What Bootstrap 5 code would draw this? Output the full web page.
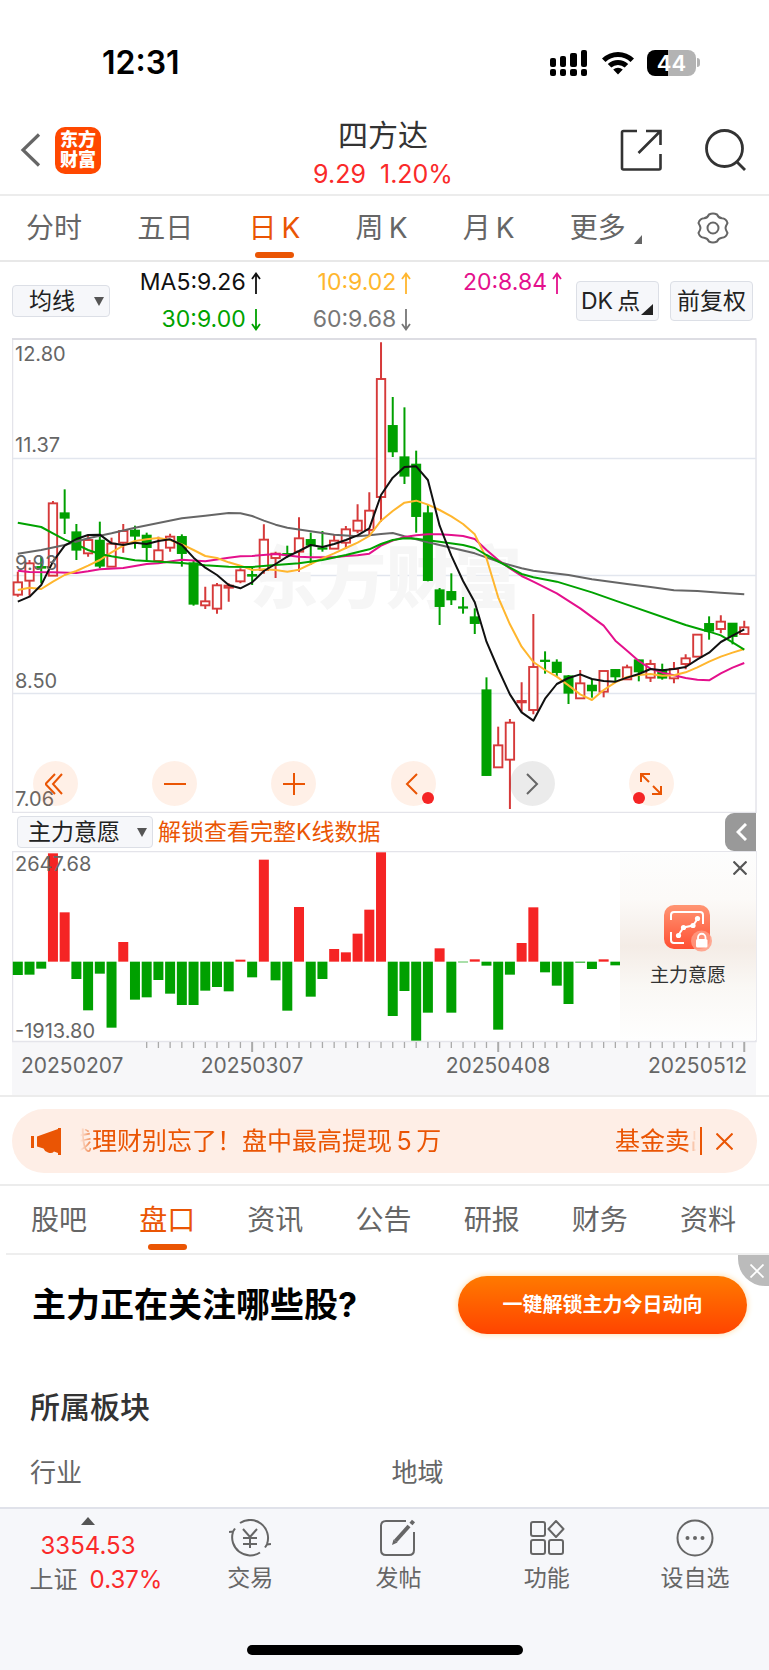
<!DOCTYPE html>
<html lang="zh-CN">
<head>
<meta charset="utf-8">
<meta name="viewport" content="width=device-width, initial-scale=1">
<title>四方达 日K</title>
<link href="https://cdn.jsdelivr.net/npm/bootstrap@5.3.0/dist/css/bootstrap.min.css" rel="stylesheet">
<style>
:root { --accent:#ea5504; --up:#fa2a2a; --txt:#333; --dim:#666; }
body { font-family: Inter, "Noto Sans CJK SC", sans-serif; color: var(--txt); background:#fff; }
a { text-decoration: none; color: inherit; }
svg { display: block; flex: none; }
.plain-btn { border:0; background:none; padding:0; color:inherit; }
.rule { border-bottom: 2px solid #ececec; }

.statusbar { height: 110px; padding: 15px 69px 0 102px; font-size: 32px; font-weight: 600; color:#000; }
.wifi { margin: 0 13px 0 15px; }
.battery { width: 49px; height: 26px; border-radius: 8px; background: linear-gradient(90deg,#000 43%,#b3b3b3 43%); color:#fff; font-size: 22px; line-height: 26px; font-weight: 600; text-align:center; }
.battery-tip { width: 3px; height: 9px; border-radius: 0 3px 3px 0; background:#b3b3b3; margin-left: 1px; }

.stock-head { height: 86px; padding: 0 23px 4px 20px; }
.head-side { flex: 1; }
.head-actions { gap: 43px; }
.logo { width: 46px; height: 47px; border-radius: 10px; background:#ff4800; color:#fff; font-size: 18px; line-height: 20px; font-weight: 900; margin-left: 14px; }
.stock-name { font-size: 30px; line-height: 40px; }
.stock-price { font-size: 25px; line-height: 38px; color: var(--up); white-space: pre; }
.stock-title { padding-top: 8px; }

.period-tabs { height: 66px; padding: 0 40px 0 26px; font-size: 28px; color: var(--dim); border-bottom: 2px solid #e8e8e8; }
.period-tabs .nav-link, .info-tabs .nav-link { padding: 0; color: inherit; font-size: 28px; line-height: 40px; position: relative; }
.period-tabs .nav-link.active, .info-tabs .nav-link.active { color: var(--accent); }
.nav-link.active::after { content:""; position:absolute; left:50%; margin-left:-19px; bottom:-10px; width:39px; height:6px; border-radius:3px; background: var(--accent); }

.soft-btn { background-color:#f6f7fa; border:1px solid #dcdfe6; border-radius:4px; color:#222; font-size:23px; line-height:30px; }
.ma-bar { height: 76px; padding: 2px 16px 0 12px; }
.pick { appearance:none; background-image:url("data:image/svg+xml,%3Csvg xmlns='http://www.w3.org/2000/svg' viewBox='0 0 10 9'%3E%3Cpath d='M0 0h10L5 9z' fill='%23555'/%3E%3C/svg%3E"); background-repeat:no-repeat; background-position:right 5px center; background-size:10px 9px; height:32px; padding:0 20px 0 16px; line-height:28px; }
.ma-pick { width: 98px; }
.force-pick { width: 136px; padding-left: 10px; }
.ma-grid { display:grid; grid-template-columns:repeat(3,1fr); font-size:23px; line-height:37px; margin-right: 14px; }
.ma-cell { display:flex; align-items:center; justify-content:flex-end; gap:5px; }
.tool-btn { width: 83px; height: 40px; padding: 0; position: relative; }
.adjust-btn { margin-left: 11px; }
.corner { position:absolute; right:5px; bottom:5px; }

.chart-wrap { margin: 0 12px; position: relative; }
.chart-wrap > svg { width:100%; height:auto; }
.axis-label { font: 20px Inter, sans-serif; fill:#666; }
.date-label { font: 21px Inter, sans-serif; fill:#666; }
.chart-tools { position:absolute; left:21px; right:83px; bottom:7px; }
.round-btn { width:45px; height:45px; border:0; padding:0; border-radius:50%; background:rgba(255,120,40,.11); position:relative; }
.round-btn.off { background:rgba(0,0,0,.08); }
.red-dot { position:absolute; width:12px; height:12px; border-radius:50%; background:#f52424; bottom:2px; }
.red-dot.at-end { right:2px; }
.red-dot.at-start { left:4px; }
.force-bar { height: 38px; margin:0 13px 0 17px; }
.unlock { color: var(--accent); font-size: 23px; margin-left: 5px; }
.fold-btn { width:31px; height:38px; border:0; padding:0 0 0 11px; background:#999; border-radius:9px 0 0 9px; }
.lock-panel { position:absolute; top:1px; right:1px; width:136px; height:188px; background:linear-gradient(180deg,#fdfdfd 0%,#fcfaf8 25%,#f4ece6 50%,#faf8f5 72%,#fefefe 100%); font-size:19px; color:#333; }
.lock-name { margin-top: 10px; }
.lock-icon { margin-top: 2px; }
.lock-close { position:absolute; top:9px; right:9px; }

.notice { margin: 12px 12px 11px; height: 64px; border-radius: 32px; background:#feeee6; color:var(--accent); font-size:25px; padding: 0 24px 0 19px; }
.notice-close { margin-left: 14px; }
.ticker { flex:1; margin: 0 4px 0 18px; overflow:hidden; white-space:pre; line-height:38px; -webkit-mask-image:linear-gradient(90deg,transparent,#000 16px,#000 calc(100% - 10px),transparent); mask-image:linear-gradient(90deg,transparent,#000 16px,#000 calc(100% - 10px),transparent); }
.ticker-run { margin-left:-13px; display:flex; justify-content:space-between; margin-right:-19px; }
.info-tabs { height: 67px; padding: 0 33px 0 31px; color:var(--dim); }
.info-line { margin-left:6px; border-bottom:2px solid #eee; }
.promo { padding: 21px 22px 18px 32px; position: relative; }
.promo h2 { font-size: 34px; line-height: 58px; font-weight: 700; color:#000; }
.cta { width:289px; height:58px; border:0; border-radius:29px; background:linear-gradient(#ff7a00,#ff4400); box-shadow:0 0 6px #ffd9a0; color:#fff; font-size:20px; font-weight:700; }
.promo-close { position:absolute; top:0; right:0; width:31px; height:31px; background:#bbb; border-radius:0 0 0 27px; }
.promo-close svg { margin-left: 12px; }
.sector { padding: 32px 30px 12px; }
.sector h3 { font-size: 30px; line-height: 46px; font-weight: 500; margin-bottom: 21px; }
.sector dt { flex: none; font-size: 26px; line-height: 44px; font-weight: 400; color: var(--dim); width: 51%; }

.dock { border-top:2px solid #e0e2ea; background:#f6f7fa; color:var(--dim); height:163px; position:relative; }
.dock-index { width:176px; padding-top:8px; font-size:24px; line-height:34px; }
.dock-index .up { color: var(--up); }
.dock-item { flex:1; padding-top:10px; font-size:23px; line-height:34px; }
.home-bar { position:absolute; bottom:15px; left:50%; margin-left:-138px; width:276px; height:10px; border-radius:5px; background:#000; }
</style>
</head>
<body>
<div class="statusbar d-flex align-items-center justify-content-between">
  <span>12:31</span>
  <div class="d-flex align-items-center">
    <svg width="37" height="26" viewBox="0 0 37 26"><rect x="0" y="8" width="6" height="9" rx="2"/><rect x="10" y="6" width="6" height="11" rx="2"/><rect x="20" y="3" width="7" height="14" rx="2"/><rect x="31" y="0" width="6" height="17" rx="2"/><rect x="0" y="19" width="6" height="7" rx="2"/><rect x="10" y="19" width="6" height="7" rx="2"/><rect x="20" y="19" width="7" height="7" rx="2"/><rect x="31" y="19" width="6" height="7" rx="2"/></svg>
    <svg class="wifi" width="32" height="24" viewBox="0 0 32 24"><path d="M0 7.500A23 23 0 0 1 32 7.500L28.500 11A18 18 0 0 0 3.500 11ZM5.800 13A15 15 0 0 1 26.200 13L22.700 16.500A10 10 0 0 0 9.300 16.500ZM11.200 18.600A7.500 7.500 0 0 1 20.800 18.600L16 23.600Z"/></svg>
    <div class="battery">44</div><div class="battery-tip"></div>
  </div>
</div>

<header class="stock-head rule d-flex align-items-center">
  <div class="head-side d-flex align-items-center">
    <button class="plain-btn" aria-label="返回"><svg width="21" height="34" viewBox="0 0 21 34" fill="none" stroke="#666" stroke-width="3.200"><path d="M19 1.500 3 17 19 32.500"/></svg></button>
    <div class="logo d-flex flex-column align-items-center justify-content-center"><span>东方</span><span>财富</span></div>
  </div>
  <div class="stock-title text-center">
    <div class="stock-name">四方达</div>
    <div class="stock-price">9.29  1.20%</div>
  </div>
  <div class="head-side head-actions d-flex align-items-center justify-content-end">
    <button class="plain-btn" aria-label="分享"><svg width="42" height="42" viewBox="0 0 42 42" fill="none" stroke="#333" stroke-width="2.600"><path d="M17 2H3.500Q2 2 2 3.500V39q0 1.500 1.500 1.500H39q1.500 0 1.500-1.500V25M26 2H40.500V16M40.500 2 18.500 24"/></svg></button>
    <button class="plain-btn" aria-label="搜索"><svg width="41" height="42" viewBox="0 0 41 42" fill="none" stroke="#333" stroke-width="2.800"><circle cx="19.500" cy="19.500" r="18"/><path d="M32 33l8 8"/></svg></button>
  </div>
</header>

<nav class="period-tabs nav d-flex align-items-center justify-content-between flex-nowrap">
  <a class="nav-link" href="#">分时</a>
  <a class="nav-link" href="#">五日</a>
  <a class="nav-link active" href="#">日&thinsp;K</a>
  <a class="nav-link" href="#">周&thinsp;K</a>
  <a class="nav-link" href="#">月&thinsp;K</a>
  <a class="nav-link d-flex align-items-end" href="#">更多<svg class="ms-2 mb-1" width="8" height="9" viewBox="0 0 8 9"><path d="M8 0V9H0Z" fill="#666"/></svg></a>
  <button class="plain-btn" aria-label="设置"><svg width="32" height="32" viewBox="0 0 32 32" fill="none" stroke="#666" stroke-width="2"><path d="M12 2.500Q16 0.500 20 2.500Q21.500 6 25 6.300Q29 6.500 30.500 11Q28.500 14.500 28.500 16T30.500 21Q29 25.500 25 25.700Q21.500 26 20 29.500Q16 31.500 12 29.500Q10.500 26 7 25.700Q3 25.500 1.500 21Q3.500 17.500 3.500 16T1.500 11Q3 6.500 7 6.300Q10.500 6 12 2.500Z"/><circle cx="16" cy="16" r="5.500"/></svg></button>
</nav>

<section class="ma-bar d-flex align-items-center">
  <select class="soft-btn pick ma-pick" aria-label="均线类型"><option>均线</option></select>
  <div class="ma-grid flex-grow-1">
    <div class="ma-cell" style="color:#111">MA5:9.26<svg width="10" height="22" viewBox="0 0 10 22" fill="none" stroke="currentColor" stroke-width="1.800"><path d="M5 22V2M1 7 5 1.500 9 7"/></svg></div>
    <div class="ma-cell" style="color:#ffb62e">10:9.02<svg width="10" height="22" viewBox="0 0 10 22" fill="none" stroke="currentColor" stroke-width="1.800"><path d="M5 22V2M1 7 5 1.500 9 7"/></svg></div>
    <div class="ma-cell" style="color:#e4108c">20:8.84<svg width="10" height="22" viewBox="0 0 10 22" fill="none" stroke="currentColor" stroke-width="1.800"><path d="M5 22V2M1 7 5 1.500 9 7"/></svg></div>
    <div class="ma-cell" style="color:#00a200">30:9.00<svg width="10" height="22" viewBox="0 0 10 22" fill="none" stroke="currentColor" stroke-width="1.800"><path d="M5 0V20M1 15 5 20.500 9 15"/></svg></div>
    <div class="ma-cell" style="color:#777">60:9.68<svg width="10" height="22" viewBox="0 0 10 22" fill="none" stroke="currentColor" stroke-width="1.800"><path d="M5 0V20M1 15 5 20.500 9 15"/></svg></div>
  </div>
  <button class="soft-btn tool-btn text-start ps-1">DK&thinsp;点<svg class="corner" width="12" height="11" viewBox="0 0 12 11"><path d="M12 0V11H0Z" fill="#222"/></svg></button>
  <button class="soft-btn tool-btn adjust-btn">前复权</button>
</section>

<section class="chart-wrap">
  <svg id="kline" viewBox="0 0 745 475" role="img" aria-label="日K线图"></svg>
  <div class="chart-tools d-flex justify-content-between">
    <button class="round-btn" aria-label="最早"><svg class="m-auto" width="22" height="24" viewBox="0 0 22 24" fill="none" stroke="#ea5504" stroke-width="2"><path d="M10 2 0.500 12 10 22M17 2 8 12 17 22"/></svg></button>
    <button class="round-btn" aria-label="缩小"><svg class="m-auto" width="22" height="22" viewBox="0 0 22 22" stroke="#ea5504" stroke-width="2"><path d="M0 11H22"/></svg></button>
    <button class="round-btn" aria-label="放大"><svg class="m-auto" width="22" height="22" viewBox="0 0 22 22" stroke="#ea5504" stroke-width="2"><path d="M0 11H22M11 0V22"/></svg></button>
    <button class="round-btn" aria-label="向前"><svg class="m-auto" width="16" height="22" viewBox="0 0 16 22" fill="none" stroke="#ea5504" stroke-width="2"><path d="M12 1 2 11 12 21"/></svg><span class="red-dot at-end"></span></button>
    <button class="round-btn off" aria-label="向后"><svg class="m-auto" width="14" height="22" viewBox="0 0 14 22" fill="none" stroke="#666" stroke-width="2"><path d="M2 1 12 11 2 21"/></svg></button>
    <button class="round-btn" aria-label="全屏"><svg class="m-auto" width="22" height="22" viewBox="0 0 22 22" fill="none" stroke="#ea5504" stroke-width="2"><path d="M1 9V1H10M1 1 9 9M21 13V21H12M21 21 13 13"/></svg><span class="red-dot at-start"></span></button>
  </div>
</section>

<section class="force-bar d-flex align-items-center">
  <select class="soft-btn pick force-pick" aria-label="副图指标"><option>主力意愿</option></select>
  <a class="unlock flex-grow-1" href="#">解锁查看完整K线数据</a>
  <button class="fold-btn" aria-label="展开"><svg width="11" height="18" viewBox="0 0 11 18" fill="none" stroke="#fff" stroke-width="3"><path d="M10 1 2 9 10 17"/></svg></button>
</section>

<section class="chart-wrap">
  <svg id="force" viewBox="0 0 745 244" role="img" aria-label="主力意愿柱状图"></svg>
  <div class="lock-panel d-flex flex-column align-items-center justify-content-center">
    <button class="plain-btn lock-close" aria-label="关闭"><svg width="14" height="14" viewBox="0 0 14 14" stroke="#555" stroke-width="2.200"><path d="M0.500 0.500 13.500 13.500M13.500 0.500 0.500 13.500"/></svg></button>
    <svg class="lock-icon" width="50" height="48" viewBox="0 0 50 48" fill="none">
      <defs><linearGradient id="lg" x1="0" y1="0" x2="0" y2="1"><stop offset="0" stop-color="#ff9573"/><stop offset="1" stop-color="#ff4f33"/></linearGradient></defs>
      <rect x="1" y="1" width="46" height="44" rx="10" fill="url(#lg)"/>
      <path d="M8 16V11Q8 8 11 8H37Q40 8 40 11V20M8 28V36Q8 39 11 39H21" stroke="#fff" stroke-width="2"/>
      <path d="M15.500 31 20.500 23.500 30 21.500 34.500 15" stroke="#fff" stroke-width="2"/>
      <g fill="#fff"><circle cx="15.500" cy="31.500" r="2.600"/><circle cx="20.500" cy="23.500" r="2.600"/><circle cx="30" cy="21.500" r="2.600"/><circle cx="34.500" cy="14.500" r="2.600"/></g>
      <circle cx="38.500" cy="37" r="10.500" fill="#ff9b82" fill-opacity=".85"/>
      <rect x="33" y="35" width="11.500" height="8.500" rx="1.500" fill="#fff"/><path d="M35 35V33.500A3.700 3.700 0 0 1 42.500 33.500V35" stroke="#fff" stroke-width="1.800"/>
    </svg>
    <span class="lock-name">主力意愿</span>
  </div>
</section>

<div class="rule"></div>
<section class="notice d-flex align-items-center">
  <svg width="31" height="27" viewBox="0 0 31 27" fill="#ea5504"><path d="M0 8H3V20H0ZM6 8.500 27 1V0H30V27H27V25L23 23.500Q21 26 17 24.500Q13.500 23.500 12.500 20.500L6 18.500Z"/></svg>
  <div class="ticker"><div class="ticker-run"><span>钱理财别忘了！盘中最高提现&thinsp;5&thinsp;万</span><span>基金卖出</span></div></div>
  <svg width="2" height="28" viewBox="0 0 2 28"><path d="M0 0H2V28H0Z" fill="#ea5504"/></svg>
  <button class="plain-btn notice-close" aria-label="关闭通知"><svg width="17" height="17" viewBox="0 0 17 17" stroke="#ea5504" stroke-width="2"><path d="M0.500 0.500 16.500 16.500M16.500 0.500 0.500 16.500"/></svg></button>
</section>
<div class="rule"></div>

<nav class="info-tabs nav d-flex align-items-center justify-content-between flex-nowrap">
  <a class="nav-link" href="#">股吧</a>
  <a class="nav-link active" href="#">盘口</a>
  <a class="nav-link" href="#">资讯</a>
  <a class="nav-link" href="#">公告</a>
  <a class="nav-link" href="#">研报</a>
  <a class="nav-link" href="#">财务</a>
  <a class="nav-link" href="#">资料</a>
</nav>
<div class="info-line"></div>

<section class="promo d-flex align-items-center justify-content-between">
  <h2 class="m-0">主力正在关注哪些股?</h2>
  <button class="cta">一键解锁主力今日动向</button>
  <button class="plain-btn promo-close" aria-label="关闭广告"><svg width="14" height="14" viewBox="0 0 14 14" stroke="#fff" stroke-width="1.800"><path d="M0.500 0.500 13.500 13.500M13.500 0.500 0.500 13.500"/></svg></button>
</section>

<section class="sector">
  <h3>所属板块</h3>
  <dl class="d-flex m-0 overflow-hidden"><dt>行业</dt><dt>地域</dt></dl>
</section>

<footer class="dock d-flex align-items-start">
  <div class="dock-index text-center">
    <svg class="mx-auto mb-1" width="14" height="8" viewBox="0 0 14 8"><path d="M7 0 14 8H0Z" fill="#555"/></svg>
    <div class="up">3354.53</div>
    <div class="ps-3">上证<span class="up ms-2 ps-1">0.37%</span></div>
  </div>
  <a class="dock-item text-center" href="#"><svg class="mx-auto mb-1" width="42" height="38" viewBox="0 0 42 38" fill="none" stroke="#666" stroke-width="2"><path d="M11 4A18 18 0 0 1 38 25M36 28.500 38 25.500 42 25M31 33.500A18 18 0 0 1 4 13M0 13 4 12.500 6 9.500"/><path d="M14 10 21 18 28 10M14 19H28M14 25H28M21 18V29"/></svg>交易</a>
  <a class="dock-item text-center" href="#"><svg class="mx-auto mb-1" width="36" height="38" viewBox="0 0 36 38" fill="none" stroke="#666" stroke-width="2"><path d="M26 2H6Q1 2 1 7V31Q1 36 6 36H29Q34 36 34 31V13"/><path d="M15.500 22 29 7" stroke-width="4"/><path d="M12 26 13.500 20.500 17.500 23.500Z" fill="#666" stroke="none"/><path d="M31 5 33.500 2" stroke-width="4"/></svg>发帖</a>
  <a class="dock-item text-center" href="#"><svg class="mx-auto mb-1" width="36" height="38" viewBox="0 0 36 38" fill="none" stroke="#666" stroke-width="2"><rect x="2" y="3" width="14" height="14" rx="2"/><rect x="2" y="21" width="14" height="14" rx="2"/><rect x="20" y="21" width="14" height="14" rx="2"/><path d="M27 2 34.500 10 27 18 19.500 10Z" stroke-linejoin="round"/></svg>功能</a>
  <a class="dock-item text-center" href="#"><svg class="mx-auto mb-1" width="38" height="38" viewBox="0 0 38 38" fill="none" stroke="#666" stroke-width="2"><circle cx="19" cy="19" r="17.500"/><g fill="#666" stroke="none"><circle cx="11.500" cy="19" r="2"/><circle cx="19" cy="19" r="2"/><circle cx="26.500" cy="19" r="2"/></g></svg>设自选</a>
  <div class="home-bar"></div>
</footer>

<script src="https://cdn.jsdelivr.net/npm/bootstrap@5.3.0/dist/js/bootstrap.bundle.min.js"></script>
<script>
const STEP = 11.717, X0 = 5.8, RED = '#d63a3a', GREEN = '#00a000';
const cx = i => X0 + i * STEP;
// plot rows are stored at three units per pixel
const py = v => (v - 9) / 3;

// [up?, body top, body bottom, high, low]
const candles = [
[1,742,779,710,785],[1,685,737,675,782],[0,694,700,665,745],[1,505,722,498,722],[0,533,550,463,597],[0,590,646,567,675],[1,615,655,603,665],[0,615,694,560,700],[1,626,695,608,695],[1,588,623,567,653],
[0,585,604,572,641],[0,600,638,593,680],[1,646,678,605,678],[1,605,638,596,650],[0,604,656,598,695],[0,683,808,678,812],[1,799,811,755,822],[1,751,821,744,836],[1,752,758,745,800],[1,706,739,700,745],
[0,718,724,693,750],[1,614,705,568,716],[1,656,669,650,729],[0,655,660,632,668],[1,610,650,547,710],[0,613,631,593,690],[0,638,643,588,650],[1,617,641,597,641],[1,583,623,573,642],[1,557,587,508,595],
[1,527,585,472,600],[1,132,486,22,560],[0,271,351,186,366],[0,365,424,217,447],[0,387,545,347,593],[0,533,737,510,739],[0,764,815,759,870],[0,769,795,715,810],[0,815,820,786,836],[0,845,866,820,897],
[0,1064,1322,1027,1322],[1,1231,1297,1175,1297],[1,1163,1274,1152,1422],[1,1098,1102,1042,1130],[1,996,1125,837,1138],[0,975,980,949,1016],[0,981,1013,973,1023],[0,1022,1075,1020,1107],[1,1045,1090,1005,1092],[0,1050,1068,1031,1088],
[1,1008,1070,1008,1087],[0,1003,1026,1003,1042],[1,997,1033,989,1033],[0,974,1011,974,1039],[1,987,1028,974,1041],[0,1003,1030,986,1034],[1,1002,1030,981,1045],[1,970,987,958,1003],[1,899,965,899,965],[0,865,889,844,914],
[1,860,882,841,895],[0,864,905,864,928],[1,877,897,857,899]];

// [index, row] pairs for each moving average
const averages = {
'#666666': [[0,656],[2,645],[4,630],[6,610],[8,595],[10,578],[12,564],[14,550],[16,542],[18,534],[19,535],[20,543],[21,557],[22,569],[23,578],[25,589],[27,599],[29,604],[30,601],[31,597],[32,594],[33,604],[35,622],[37,638],[39,655],[41,680],[43,700],[44,707],[47,720],[49,733],[52,747],[54,756],[56,766],[58,768],[60,773],[62,778]],
'#e4108c': [[0,707],[1,711],[3,712],[5,714],[6,709],[7,703],[9,699],[10,693],[11,687],[12,685],[14,674],[16,679],[18,668],[19,664],[20,663],[22,657],[24,665],[25,667],[27,667],[28,663],[29,661],[30,656],[31,632],[32,617],[33,606],[34,601],[35,598],[36,598],[37,600],[38,603],[39,612],[40,645],[41,675],[42,700],[43,723],[44,740],[46,775],[48,820],[50,872],[51,917],[52,947],[53,978],[54,1001],[55,1013],[56,1021],[57,1029],[58,1034],[59,1036],[60,1015],[61,998],[62,984]],
'#ffb62e': [[0,765],[1,758],[2,762],[3,740],[4,720],[5,708],[6,692],[7,675],[8,652],[9,632],[10,618],[11,613],[12,609],[13,615],[14,628],[15,645],[16,663],[17,669],[18,682],[19,692],[20,705],[21,703],[22,705],[23,710],[24,704],[25,687],[26,670],[27,655],[28,639],[29,623],[30,603],[31,557],[32,528],[33,503],[34,497],[35,509],[36,525],[37,544],[38,567],[39,598],[40,670],[41,787],[42,868],[43,935],[44,981],[45,1005],[46,1025],[47,1051],[48,1078],[49,1095],[50,1065],[51,1042],[52,1026],[53,1020],[54,1017],[55,1022],[56,1021],[57,1012],[58,997],[59,980],[60,965],[61,953],[62,942]],
'#00a200': [[0,563],[2,576],[3,595],[4,614],[5,628],[6,645],[7,657],[8,664],[10,676],[12,680],[14,684],[16,691],[18,695],[20,696],[22,690],[24,685],[26,675],[28,660],[30,643],[31,627],[32,615],[33,610],[34,611],[36,620],[38,630],[39,639],[40,660],[42,698],[43,717],[44,727],[46,740],[49,772],[51,797],[57,870],[59,890],[60,901],[61,922],[62,944]],
'#111111': [[0,800],[1,785],[2,750],[3,680],[4,632],[5,612],[6,600],[7,599],[8,625],[9,630],[10,623],[11,627],[12,618],[13,613],[14,630],[15,668],[16,698],[17,720],[18,750],[19,760],[20,742],[21,708],[22,687],[23,665],[24,648],[25,630],[26,636],[27,627],[28,615],[29,601],[30,580],[31,480],[32,428],[33,396],[34,394],[35,435],[36,572],[37,662],[38,738],[39,802],[40,920],[41,1002],[42,1078],[43,1132],[44,1157],[45,1091],[46,1047],[47,1029],[48,1018],[49,1032],[50,1038],[51,1040],[52,1028],[53,1017],[54,1002],[55,1006],[56,1002],[57,996],[58,973],[59,953],[60,921],[61,902],[62,883]]
};

let k = '<rect x="0.5" y="1" width="743.5" height="473.500" fill="#fff" stroke="#e4e4ea" stroke-width="1.500"/><path d="M0 1H744" stroke="#dddde3" stroke-width="2"/>';
[120.5, 237.5, 355.5].forEach(y => k += `<path d="M1 ${y}H744" stroke="#e2e6ee" stroke-width="1.3"/>`);
k += '<text x="374" y="265" text-anchor="middle" font-size="68" font-weight="900" font-family="Noto Sans CJK SC" fill="#f6f6f6">东方财富</text>';
candles.forEach(([up, t, b, h, l], i) => {
  const x = cx(i), T = py(t), B = py(b);
  if (up) {
    k += `<path d="M${x} ${py(h)}V${T}M${x} ${B}V${py(l)}" stroke="${RED}" stroke-width="2"/>`;
    k += `<rect x="${x - 4.2}" y="${T}" width="8.4" height="${Math.max(B - T, 1)}" fill="#fff" stroke="${RED}" stroke-width="1.9"/>`;
  } else {
    k += `<path d="M${x} ${py(h)}V${py(l)}" stroke="${GREEN}" stroke-width="2"/>`;
    k += `<rect x="${x - 5}" y="${T - 0.3}" width="10" height="${B - T + 0.6}" fill="${GREEN}"/>`;
  }
});
for (const c in averages)
  k += `<polyline fill="none" stroke="${c}" stroke-width="2" stroke-linejoin="round" points="${averages[c].map(([i, v]) => cx(i) + ',' + py(v)).join(' ')}"/>`;
[['12.80', 23], ['11.37', 114], ['9.93', 232], ['8.50', 350], ['7.06', 468]].forEach(([t, y]) => k += `<text class="axis-label" x="3" y="${y}">${t}</text>`);
document.getElementById('kline').innerHTML = k;

const force = [390,389,371,25,202,402,496,386,548,291,464,457,405,446,480,480,437,426,439,344,397,44,406,497,186,455,402,312,322,266,194,22,513,438,587,503,310,503,352,343,362,554,389,294,187,382,422,477,353,372,343,361];
let f = '<rect x="0" y="190" width="744" height="54" fill="#f7f7f9"/><rect x="0.5" y="0.5" width="743.5" height="190" fill="#fff" stroke="#e4e4ea" stroke-width="1.500"/>';
force.forEach((v, i) => {
  const a = Math.min(v, 350), h = Math.abs(v - 350);
  f += `<rect x="${cx(i) - 5}" y="${(a - 18) / 3}" width="10" height="${h / 3}" fill="${v < 350 ? '#f52424' : GREEN}"/>`;
});
for (let i = 11; i < 63; i++) {
  const major = i === 20 || i === 41 || i === 62;
  f += `<path d="M${cx(i)} 191V${major ? 201 : 197}" stroke="#aaa" stroke-width="${major ? 2 : 1.3}"/>`;
}
f += '<text class="axis-label" x="3" y="20">2647.68</text><text class="axis-label" x="3" y="187">-1913.80</text>';
[['20250207', 9, 'start'], ['20250307', 240, 'middle'], ['20250408', 486, 'middle'], ['20250512', 735, 'end']].forEach(([t, x, a]) => f += `<text class="date-label" x="${x}" y="222" text-anchor="${a}">${t}</text>`);
document.getElementById('force').innerHTML = f;
</script>
</body>
</html>
